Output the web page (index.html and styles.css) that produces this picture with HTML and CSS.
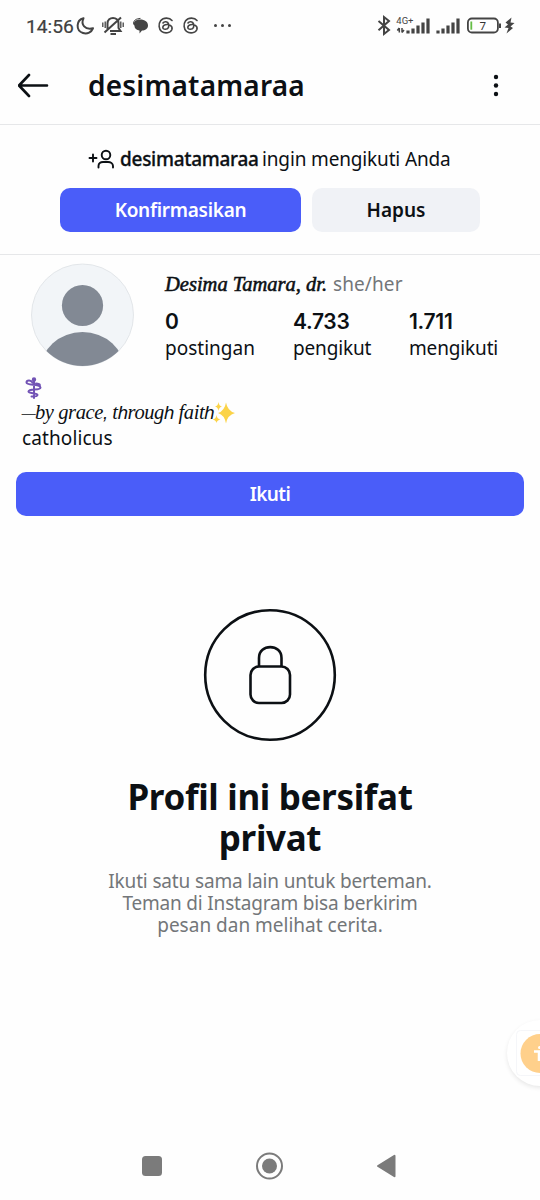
FILE: index.html
```html
<!DOCTYPE html>
<html lang="id">
<head>
<meta charset="utf-8">
<title>desimatamaraa</title>
<link rel="stylesheet" href="styles.css">
</head>
<body>
<div class="screen">
  <div class="status">
    <span class="clock">14:56</span>
    <svg class="status-left" width="160" height="50" viewBox="75 0 160 50" fill="none" stroke="#444" stroke-width="2">
      <path d="M83.500 18.200C76 20 75.500 30.500 83 33C87.500 34.400 91.500 32 93 28.300C85 30.200 80.500 24.500 83.500 18.200Z" stroke-linejoin="round"/>
      <path d="M107.500 29V23.500C107.500 16 118.500 16 118.500 23.500V28L120.500 31H110M104.500 32.500L121 17.500M110.500 34H116" stroke-width="2"/>
      <path d="M102.800 22.500V27M105.200 21.500V28M120.800 21.500V28M123.200 22.500V27" stroke-width="1.300"/>
      <path d="M134.500 26C132.500 22 135.500 19.500 140 19.500C145 19.500 148 22 148 25.500C148 29 145 30.500 142 30.500L139.500 33.500V30.500C136.500 30.300 134.500 28.500 134.500 26Z" fill="#444" stroke="none"/>
      <path d="M133.600 24.500C133 20.500 136 18.600 140.500 18.400" stroke-width="1"/>
      <g id="thread" stroke-width="1.600" stroke-linecap="round">
        <path d="M172 20.500C169.500 17.300 163.500 17.200 160.600 20.800C158.300 24 158.700 29 161.500 31.300C165 34 170.500 33 171.800 29.700C173.300 25.500 168.500 24 165.400 24.800C162 25.600 162 29.400 165.300 29.300C168.500 29.200 169.300 26.500 168.500 23.800C167.800 21.300 164.200 21 163 23"/>
      </g>
      <use href="#thread" x="25"/>
      <g fill="#444" stroke="none"><circle cx="215.500" cy="25.500" r="1.500"/><circle cx="222.500" cy="25.500" r="1.500"/><circle cx="229.500" cy="25.500" r="1.500"/></g>
    </svg>
    <svg class="status-right" width="145" height="50" viewBox="373 0 145 50" fill="none" stroke="#444">
      <path d="M378.500 21L389 30L384 34V17L389 21L378.500 30.200" stroke-width="2"/>
      <text x="396.300" y="24.300" class="net">4G+</text>
      <path d="M399.300 32.500V28M397.300 30.500L399.300 28M402 28V32.500M404 30L402 32.500" stroke-width="1.500"/>
      <path d="M408 30.500V33.500M413 28.500V33.500M418 25.500V33.500M423 22.500V33.500M428 18.500V33.500M438 30.500V33.500M443 28.500V33.500M448 25.500V33.500M453 22.500V33.500M458 18.500V33.500" stroke-width="3.200"/>
      <rect x="467.900" y="18.500" width="30" height="14" rx="4" stroke-width="1.800"/>
      <path d="M500 23.500V28" stroke-width="2"/>
      <path d="M471.300 21.500V29.700" stroke="#65bd45" stroke-width="1.800"/>
      <text x="479.600" y="30" class="level">7</text>
      <path d="M511.500 17.500L505.500 22.500L508 24.500L504.500 27.500L508.500 28L506.500 33.500L513 28L510.500 26.500L514.500 23L510.500 22.500Z" fill="#444" stroke="none"/>
    </svg>
  </div>

  <header class="header">
    <svg width="32" height="26" viewBox="0 0 32 26" fill="none" stroke="#0c1014" stroke-width="2.600" stroke-linecap="round" stroke-linejoin="round"><path d="M11 3L1 13.500L11 24M1.500 13.500H29"/></svg>
    <h1 class="username">desimatamaraa</h1>
    <svg class="more" width="8" height="26" viewBox="0 0 8 26" fill="#0c1014"><circle cx="4" cy="5" r="2.200"/><circle cx="4" cy="13.500" r="2.200"/><circle cx="4" cy="22" r="2.200"/></svg>
  </header>

  <section class="request">
    <div class="request-line">
      <svg width="27" height="20" viewBox="0 0 27 20" fill="none" stroke="#0c1014" stroke-width="1.900" stroke-linecap="round"><path d="M1.500 9H8.500M5 5.500V12.500M10.500 18.500V17C10.500 14.500 12.500 13 15 13H20C22.500 13 25 14.500 25 17V18.500"/><circle cx="18" cy="6" r="4.300"/></svg>
      <span class="requester">desimatamaraa</span>
      <span class="request-text">ingin mengikuti Anda</span>
    </div>
    <div class="request-actions">
      <button class="btn primary confirm">Konfirmasikan</button>
      <button class="btn neutral">Hapus</button>
    </div>
  </section>

  <section class="profile">
    <svg class="avatar" width="104" height="104" viewBox="0 0 104 104">
      <defs><clipPath id="disc"><circle cx="52.500" cy="52" r="51"/></clipPath></defs>
      <circle cx="52.500" cy="52" r="51" fill="#f2f5f8" stroke="#dde1e5" stroke-width=".8"/>
      <g clip-path="url(#disc)" fill="#828994"><circle cx="52.500" cy="42.500" r="20.600"/><ellipse cx="52.500" cy="107" rx="42" ry="38"/></g>
    </svg>
    <div class="details">
      <div class="name-line"><span class="fullname">Desima Tamara, dr.</span><span class="pronoun">she/her</span></div>
      <div class="stats">
        <div class="stat posts"><b>0</b><span>postingan</span></div>
        <div class="stat followers"><b>4.733</b><span>pengikut</span></div>
        <div class="stat following"><b>1.711</b><span>mengikuti</span></div>
      </div>
    </div>
  </section>

  <section class="bio">
    <div class="bio-line"><svg class="staff" width="24" height="24" viewBox="0 0 24 24" fill="none" stroke="#7253b5" stroke-width="2" stroke-linecap="round"><path d="M12 3V22M10.500 6.500C9 3.500 4.500 4 4.500 6.500C4.500 10 18 7.500 18.500 11.500C18.500 15 7 12 6.500 15.500C6.500 18 15.500 16.500 15.500 19C15.500 20.500 13 20.500 9.500 20.500M14 7.500C16 7.500 19 8.500 17.500 10"/><circle cx="12" cy="3.500" r="1.200" fill="#7253b5"/></svg></div>
    <div class="bio-line"><span class="motto"><span class="dash">—</span>by grace<i>,</i> t<i>h</i>roug<i>h</i> fait<i>h</i></span><svg width="24" height="24" viewBox="0 0 24 24" fill="#fbd348"><path d="M14 1.500Q15.500 10 23 12Q15.500 14 14 22.500Q12.500 14 6 12Q12.500 10 14 1.500Z"/><path d="M6.500 1Q7 5 10 5.500Q7 6 6.500 10Q6 6 3 5.500Q6 5 6.500 1ZM4.500 14Q5 18 8.500 18.500Q5 19 4.500 22Q4 19 .5 18.500Q4 18 4.500 14Z"/></svg></div>
    <div class="bio-line"><span class="faith">catholicus</span></div>
  </section>

  <button class="btn primary follow">Ikuti</button>

  <main class="private">
    <svg width="134" height="134" viewBox="0 0 134 134" fill="none" stroke="#0c1014" stroke-width="2.600"><circle cx="67" cy="67" r="64.800"/><rect x="47.500" y="58.500" width="39.500" height="36.500" rx="8.500"/><path d="M56 58V50C56 35.500 78.500 35.500 78.500 50V58"/></svg>
    <h2 class="private-title"><span>Profil ini bersifat</span><span>privat</span></h2>
    <p class="private-text"><span class="line-1">Ikuti satu sama lain untuk berteman.</span><span class="line-2">Teman di Instagram bisa berkirim</span><span>pesan dan melihat cerita.</span></p>
  </main>

  <svg class="bubble" width="50" height="80" viewBox="490 1015 50 80">
    <defs><filter id="soft" x="-30%" y="-30%" width="160%" height="160%"><feGaussianBlur stdDeviation="2.500"/></filter></defs>
    <circle cx="540" cy="1055" r="32.500" fill="#000" opacity=".1" filter="url(#soft)"/>
    <circle cx="540" cy="1053" r="33" fill="#fff"/>
    <rect x="516.500" y="1030.500" width="46" height="45" rx="4" fill="#fff" stroke="#f5f6f9"/>
    <circle cx="540" cy="1053.500" r="19.500" fill="#ffd08b"/>
    <path d="M534 1051.500H540M539 1052V1061" stroke="#fff" stroke-width="2.500"/><circle cx="539.500" cy="1047.500" r="1.500" fill="#fff"/>
  </svg>

  <nav class="navbar">
    <svg width="260" height="30" viewBox="0 0 260 30" fill="#7b7b7b"><rect x="2" y="6" width="20" height="20" rx="3.500"/><circle cx="129.500" cy="16" r="12.500" fill="none" stroke="#7b7b7b" stroke-width="2"/><circle cx="129.500" cy="16" r="7.500"/><path d="M254.500 5.800V26.200L238 16Z" stroke="#7b7b7b" stroke-width="2" stroke-linejoin="round"/></svg>
  </nav>
</div>
</body>
</html>
```

FILE: styles.css
```css
* { box-sizing: border-box; }
body { margin: 0; background: #fff; color: #0c1014; font-family: "Noto Sans", sans-serif; }
h1, h2, p { margin: 0; }
span, b { white-space: nowrap; }
.screen { position: relative; width: 540px; height: 1200px; overflow: hidden; background: #fefefe; display: flex; flex-direction: column; }
svg { display: block; flex: none; }

.status { height: 50px; padding-left: 26px; display: flex; }
.clock { width: 49px; font: 400 19.200px/53px Roboto, sans-serif; color: #404040; -webkit-text-stroke: .2px #404040; }
.status-right { margin-left: 138px; }
.net { font: 9.500px Roboto, sans-serif; fill: #444; stroke: none; }
.level { font: 11.500px "Noto Sans", sans-serif; fill: #333; stroke: none; }

.header { height: 75px; padding: 0 40px 4px 18px; display: flex; align-items: center; border-bottom: 1px solid #e6e7e9; }
.username { margin-left: 38px; font-size: 28px; line-height: 38px; font-weight: 600; letter-spacing: .2px; }
.more { margin-left: auto; }

.request { height: 130px; padding-top: 20px; border-bottom: 1px solid #e6e7e9; }
.request-line { height: 28px; padding-left: 88px; display: flex; align-items: center; font-size: 19px; }
.requester { width: 142px; margin-left: 5px; font-weight: 500; letter-spacing: -.28px; -webkit-text-stroke: .3px #0c1014; }
.request-text { letter-spacing: -.15px; }
.request-actions { margin: 15px 0 0 60px; display: flex; gap: 11px; }
.btn { height: 44px; padding: 0; border: 0; border-radius: 10px; font: 600 19px/44px "Noto Sans", sans-serif; text-align: center; }
.primary { background: #4a5df9; color: #fff; }
.neutral { width: 168px; background: #f0f2f6; color: #0c1014; }
.confirm { width: 241px; letter-spacing: -.28px; }

.profile { height: 117px; padding: 8px 0 0 30px; display: flex; }
.details { margin-left: 31px; padding-top: 7px; }
.name-line { height: 28px; display: flex; align-items: center; font-size: 19px; }
.fullname { width: 168px; font-family: "Liberation Serif", serif; font-style: italic; font-size: 20.500px; -webkit-text-stroke: .55px #0c1014; }
.pronoun { color: #737679; letter-spacing: .1px; }
.stats { display: flex; margin-top: 10px; }
.stat { display: flex; flex-direction: column; font-size: 19px; line-height: 27px; }
.stat b { font: 600 21px/27px Inter, sans-serif; letter-spacing: -.3px; }
.posts { width: 128px; }
.followers { width: 116px; }
.following, .followers { letter-spacing: -.15px; }

.bio { height: 100px; padding: 3px 0 0 22px; font-size: 19px; }
.bio-line { height: 25px; display: flex; align-items: center; }
.motto { display: flex; width: 190px; font-family: "Liberation Serif", serif; font-style: italic; font-size: 20.500px; letter-spacing: -.4px; white-space: pre; align-items: baseline; }
.dash { width: 14px; font-size: 15px; transform: translateY(-1px); -webkit-text-stroke: .4px #0c1014; }
.motto i { font-family: "Liberation Sans", sans-serif; font-size: 18.500px; }
.faith { letter-spacing: .1px; }
.follow { margin-left: 16px; width: 508px; flex: none; letter-spacing: -.6px; }

.private { height: 605px; padding-top: 92px; display: flex; flex-direction: column; align-items: center; }
.private-title { margin-top: 34px; font-size: 35px; line-height: 41px; font-weight: 700; letter-spacing: -.32px; }
.private-title, .private-text { display: flex; flex-direction: column; align-items: center; }
.private-text { margin-top: 12px; font-size: 19px; line-height: 22px; color: #737679; }
.line-1 { letter-spacing: -.15px; }
.line-2 { letter-spacing: -.18px; }

.bubble { position: absolute; right: 0; top: 1015px; }
.navbar { padding: 29px 0 0 140px; }
```
